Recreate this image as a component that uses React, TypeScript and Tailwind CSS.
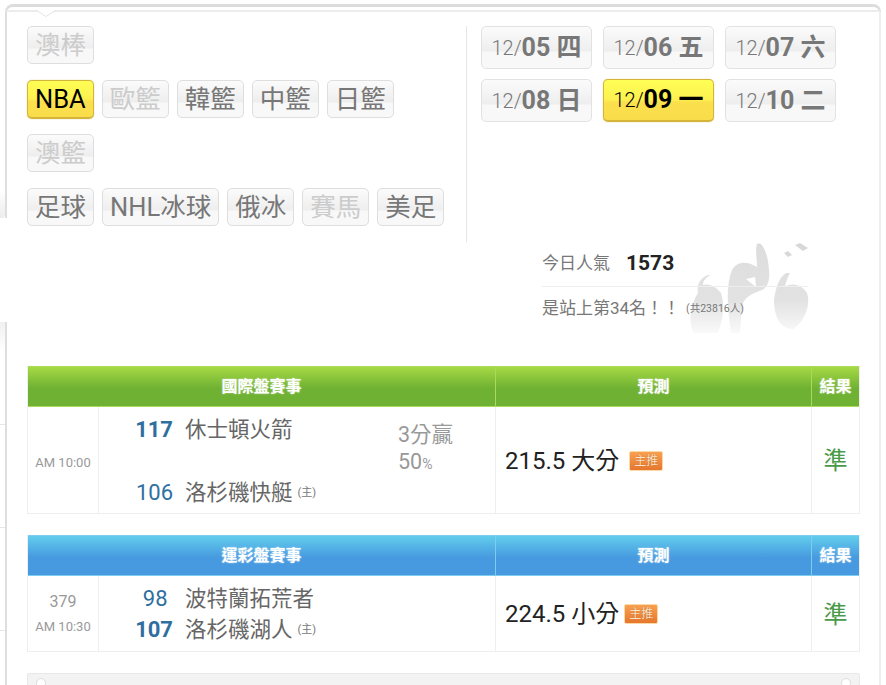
import React from 'react';

const btnBase =
  'h-[38px] rounded-[5px] border border-[#dedede] px-[7px] text-[25.5px] leading-[36px] whitespace-nowrap bg-[linear-gradient(#fbfbfb,#eeeeee_58%,#f8f8f8_62%,#f8f8f8)]';
const btnOn =
  'h-[39px] rounded-[5px] border border-[#d4b53a] border-b-2 px-[7px] text-[25.5px] leading-[37px] text-black whitespace-nowrap bg-[linear-gradient(#ffff55,#fdf050_50%,#fbe04e_55%,#f9dc4a)] shadow-[0_0_1px_#c9a92e]';

const leagueRows = [
  [{ name: '澳棒', off: true }],
  [
    { name: 'NBA', on: true },
    { name: '歐籃', off: true },
    { name: '韓籃' },
    { name: '中籃' },
    { name: '日籃' },
  ],
  [{ name: '澳籃', off: true }],
  [
    { name: '足球' },
    { name: 'NHL冰球' },
    { name: '俄冰' },
    { name: '賽馬', off: true },
    { name: '美足' },
  ],
];

const dates = [
  { d: '05', w: '四' },
  { d: '06', w: '五' },
  { d: '07', w: '六' },
  { d: '08', w: '日' },
  { d: '09', w: '一', on: true },
  { d: '10', w: '二' },
];

const LeagueButton = ({ name, on, off }: { name: string; on?: boolean; off?: boolean }) => (
  <div className={on ? btnOn : `${btnBase} ${off ? 'text-[#cccccc]' : 'text-[#777777]'}`}>{name}</div>
);

const DateButton = ({ d, w, on }: { d: string; w: string; on?: boolean }) => (
  <div
    className={`flex h-[43px] w-[111px] items-center justify-center rounded-[5px] border whitespace-nowrap ${
      on
        ? 'border-[#d4b53a] border-b-2 text-black shadow-[0_0_1px_#c9a92e] bg-[linear-gradient(#ffff55,#fdf050_50%,#fbe04e_55%,#f9dc4a)]'
        : 'border-[#e2e2e2] text-[#777777] bg-[linear-gradient(#fbfbfb,#eeeeee_58%,#f8f8f8_62%,#f8f8f8)]'
    }`}
  >
    <span className="text-[20px] font-light">12/</span>
    <span className="text-[25px] font-bold">{d} {w}</span>
  </div>
);

const Butterfly = () => (
  <svg className="absolute left-[138px] top-[-19px]" width="135" height="100" viewBox="0 0 135 100">
    <defs>
      <linearGradient id="fade" gradientUnits="userSpaceOnUse" x1="0" y1="0" x2="0" y2="100">
        <stop offset="0" stopColor="#dcdcdc" />
        <stop offset="0.65" stopColor="#e2e2e2" />
        <stop offset="1" stopColor="#fbfbfb" />
      </linearGradient>
    </defs>
    <path
      d="M77 9C83 6 88 20 89 35C90 45 88 50 84 54C76 58 64 60 62 72L60 98L51 98C47 70 46 50 52 35C56 27 66 25 77 32C77 24 75 15 77 9z"
      fill="url(#fade)"
    />
    <path d="M66 44L75 42L76 52z" fill="#ffffff" />
    <path d="M28 40C22 42 16 48 18 58C10 70 8 88 14 98L38 98C43 85 45 70 41 58C36 51 28 48 23 50C23 46 26 42 31 40z" fill="url(#fade)" />
    <path d="M106 38C100 42 96 50 94 65C94 78 98 94 113 94C125 86 131 70 127 58C122 50 112 47 105 52C106 46 108 42 110 38z" fill="url(#fade)" />
    <path d="M115 10L120 8L128 13L123 16zM104 18L108 16L112 20L108 22z" fill="#d8d8d8" />
  </svg>
);

const Badge = () => (
  <span className="inline-block h-[20px] w-[34px] rounded-[2px] border border-[#fbd9a5] text-center text-[12px] leading-[18px] text-[#fbe3c8] [text-shadow:0_0_1px_#a85a20] bg-[linear-gradient(#f9a050,#e5772e)]">
    主推
  </span>
);

const Host = () => <span className="ml-[5px] text-[11px] text-[#777777]">(主)</span>;

const headCell = 'flex items-center justify-center text-[16px] font-bold text-white [text-shadow:0_0_2px_rgba(255,255,255,0.6)]';
const tableCols = 'grid grid-cols-[71px_397px_316px_47px]';

const SectionTable = ({
  title,
  headClass,
  lineClass,
  children,
}: {
  title: string;
  headClass: string;
  lineClass: string;
  children: React.ReactNode;
}) => (
  <div className="w-[833px] border border-t-0 border-[#eeeeee]">
    <div className={`${tableCols} h-[41px] border-y ${headClass}`}>
      <div className={`col-span-2 border-r ${lineClass} ${headCell}`}>{title}</div>
      <div className={`border-r ${lineClass} ${headCell}`}>預測</div>
      <div className={headCell}>結果</div>
    </div>
    {children}
  </div>
);

const ResultCell = () => (
  <div className="flex items-center justify-center pt-[2px] text-[24px] text-[#4a9a4a]">準</div>
);

export default function App() {
  return (
    <div
      className="flex h-[685px] w-[886px] overflow-hidden bg-white"
      style={{ fontFamily: 'Roboto, "Noto Sans CJK TC", sans-serif' }}
    >
      {/* page peeking out behind the popup */}
      <div className="flex w-[5px] shrink-0 flex-col">
        <div className="h-[190px]" />
        <div className="h-[28px] rounded-br-[3px] bg-[linear-gradient(#ffffff,#ececec)]" />
        <div className="h-[104px]" />
        <div className="h-[103px] border-b border-[#e6e6e6] bg-[linear-gradient(#f0f0f0,#ffffff_30px)]" />
        <div className="h-[103px] border-b border-[#e6e6e6]" />
        <div className="h-[103px] border-b border-[#e6e6e6]" />
      </div>

      <div className="mr-[5px] flex flex-1 flex-col pt-[4px]">
        <div className="relative h-[8px] shrink-0 rounded-t-[8px] border-x-2 border-t-[3px] border-b-2 border-x-[#dedede] border-t-[#dcdcdc] border-b-[#ececec] bg-white">
          <svg className="absolute left-[29px] top-[3px]" width="20" height="7" viewBox="0 0 20 7">
            <path d="M0 0L10 6.5L20 0" fill="#ffffff" stroke="#e4e4e4" />
          </svg>
        </div>

        <div className="flex min-h-0 flex-1">
          <div className="flex w-[2px] shrink-0 flex-col">
            <div className="h-[206px] bg-[#dedede]" />
            <div className="h-[104px]" />
            <div className="flex-1 bg-[#dedede]" />
          </div>

          <div className="min-w-0 flex-1 border-r-2 border-[#eeeeee] pt-[14px] pl-[20px]">
            <div className="flex">
              <div className="flex h-[216px] w-[440px] shrink-0 flex-col gap-[16px] border-r border-[#e6e6e6]">
                {leagueRows.map((row, i) => (
                  <div key={i} className="flex h-[38px] gap-[8px]">
                    {row.map(item => (
                      <LeagueButton key={item.name} {...item} />
                    ))}
                  </div>
                ))}
              </div>

              <div className="ml-[14px] w-[360px]">
                <div className="grid grid-cols-[111px_111px_111px] gap-x-[11px] gap-y-[10px]">
                  {dates.map(item => (
                    <DateButton key={item.d} {...item} />
                  ))}
                </div>
                <div className="relative ml-[61px] mt-[132px] w-[266px]">
                  <Butterfly />
                  <div className="relative flex h-[33px] items-center border-b border-[#eeeeee] pb-[12px]">
                    <span className="text-[17px] text-[#777777]">今日人氣</span>
                    <span className="ml-[16px] text-[21px] font-bold text-[#222222]">1573</span>
                  </div>
                  <div className="relative flex h-[43px] items-center">
                    <span className="text-[17px] text-[#777777]">是站上第34名！！</span>
                    <span className="ml-[6px] text-[10.5px] text-[#777777]">(共23816人)</span>
                  </div>
                </div>
              </div>
            </div>

            <div className="mt-[36px]">
              <SectionTable
                title="國際盤賽事"
                headClass="border-[#a8dc58] bg-[linear-gradient(#a5d944,#6fb133_55%,#6fb133)]"
                lineClass="border-[#a8dc58]"
              >
                <div className={`${tableCols} h-[106px]`}>
                  <div className="flex items-center justify-center border-r border-[#eeeeee] pt-[6px] text-[13px] text-[#999999]">
                    AM 10:00
                  </div>
                  <div className="flex border-r border-[#eeeeee]">
                    <div className="flex w-[299px] flex-col justify-between pt-[6px] pb-[3px]">
                      <div className="flex items-center text-[21.5px] leading-[34px] text-[#666666]">
                        <span className="mr-[12px] w-[74px] text-right text-[22px] font-bold text-[#2f6f9f]">117</span>
                        休士頓火箭
                      </div>
                      <div className="flex items-center text-[21.5px] leading-[34px] text-[#666666]">
                        <span className="mr-[12px] w-[74px] text-right text-[22px] text-[#2f6f9f]">106</span>
                        洛杉磯快艇
                        <Host />
                      </div>
                    </div>
                    <div className="pt-[14px] text-[21.5px] leading-[27px] text-[#999999]">
                      <div>3分贏</div>
                      <div>
                        50<span className="text-[14px]">%</span>
                      </div>
                    </div>
                  </div>
                  <div className="flex items-center gap-[10px] border-r border-[#eeeeee] pl-[9px] pt-[2px] text-[24px] text-[#222222]">
                    215.5 大分
                    <Badge />
                  </div>
                  <ResultCell />
                </div>
              </SectionTable>
            </div>

            <div className="mt-[21px]">
              <SectionTable
                title="運彩盤賽事"
                headClass="border-[#7ccdf0] bg-[linear-gradient(#62cdec,#479ae0_55%,#479ae0)]"
                lineClass="border-[#7ccdf0]"
              >
                <div className={`${tableCols} h-[75px]`}>
                  <div className="flex flex-col items-center justify-center gap-[7px] border-r border-[#eeeeee] text-[#999999]">
                    <span className="text-[16px] leading-[20px]">379</span>
                    <span className="text-[13px] leading-[16px]">AM 10:30</span>
                  </div>
                  <div className="flex flex-col justify-center border-r border-[#eeeeee] pt-[1px] text-[21.5px] leading-[31px] text-[#666666]">
                    <div className="flex items-center">
                      <span className="mr-[12px] w-[74px] text-right text-[22px] text-[#2f6f9f]">98&nbsp;</span>
                      波特蘭拓荒者
                    </div>
                    <div className="flex items-center">
                      <span className="mr-[12px] w-[74px] text-right text-[22px] font-bold text-[#2f6f9f]">107</span>
                      洛杉磯湖人
                      <Host />
                    </div>
                  </div>
                  <div className="flex items-center gap-[5px] border-r border-[#eeeeee] pl-[9px] text-[24px] text-[#222222]">
                    224.5 小分
                    <Badge />
                  </div>
                  <ResultCell />
                </div>
              </SectionTable>
            </div>

            <div className="mt-[21px] flex h-[30px] w-[833px] justify-between rounded-t-[2px] border border-[#e8e8e8] bg-[#f3f3f3] px-[8px] pt-[4px]">
              <span className="h-[10px] w-[10px] rounded-full border border-[#dddddd] bg-white" />
              <span className="h-[10px] w-[10px] rounded-full border border-[#dddddd] bg-white" />
            </div>
          </div>
        </div>
      </div>
    </div>
  );
}
